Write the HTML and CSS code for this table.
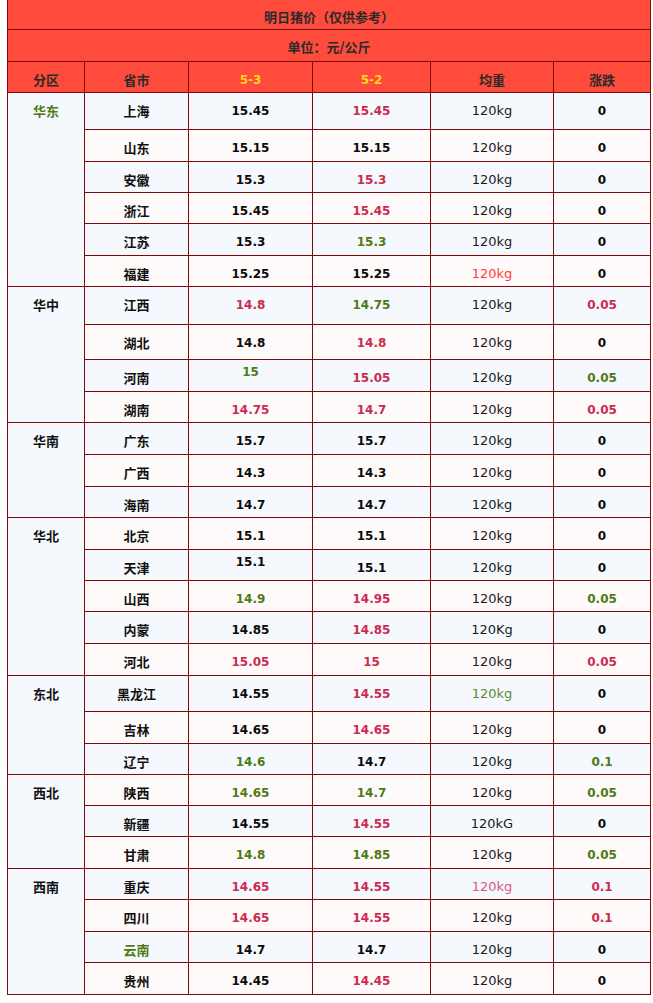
FILE: index.html
```html
<!DOCTYPE html>
<html lang="zh-CN">
<head>
<meta charset="utf-8">
<title>明日猪价</title>
<link rel="stylesheet" href="styles.css">
</head>
<body>
<table class="price">
  <colgroup>
    <col class="c1"><col class="c2"><col class="c3"><col class="c4"><col class="c5"><col class="c6">
  </colgroup>
  <thead>
    <tr class="h30"><th colspan="6" class="title">明日猪价（仅供参考）</th></tr>
    <tr class="h32"><th colspan="6" class="title">单位：元/公斤</th></tr>
    <tr class="h31">
      <th>分区</th><th>省市</th><th class="date">5-3</th><th class="date">5-2</th><th>均重</th><th>涨跌</th>
    </tr>
  </thead>
  <tbody>
    <tr class="b h37"><td rowspan="6" class="region green">华东</td><td class="prov">上海</td><td class="num">15.45</td><td class="num red">15.45</td><td class="wt">120kg</td><td class="num">0</td></tr>
    <tr class="w h32"><td class="prov">山东</td><td class="num">15.15</td><td class="num">15.15</td><td class="wt">120kg</td><td class="num">0</td></tr>
    <tr class="b h31"><td class="prov">安徽</td><td class="num">15.3</td><td class="num red">15.3</td><td class="wt">120kg</td><td class="num">0</td></tr>
    <tr class="w h31"><td class="prov">浙江</td><td class="num">15.45</td><td class="num red">15.45</td><td class="wt">120kg</td><td class="num">0</td></tr>
    <tr class="b h32"><td class="prov">江苏</td><td class="num">15.3</td><td class="num green">15.3</td><td class="wt">120kg</td><td class="num">0</td></tr>
    <tr class="w h31"><td class="prov">福建</td><td class="num">15.25</td><td class="num">15.25</td><td class="wt bright">120kg</td><td class="num">0</td></tr>

    <tr class="b h38"><td rowspan="4" class="region">华中</td><td class="prov">江西</td><td class="num red">14.8</td><td class="num green">14.75</td><td class="wt">120kg</td><td class="num red">0.05</td></tr>
    <tr class="w h35"><td class="prov">湖北</td><td class="num">14.8</td><td class="num red">14.8</td><td class="wt">120kg</td><td class="num">0</td></tr>
    <tr class="b h32"><td class="prov">河南</td><td class="num green up">15</td><td class="num red">15.05</td><td class="wt">120kg</td><td class="num green">0.05</td></tr>
    <tr class="w h31"><td class="prov">湖南</td><td class="num red">14.75</td><td class="num red">14.7</td><td class="wt">120kg</td><td class="num red">0.05</td></tr>

    <tr class="b h32"><td rowspan="3" class="region">华南</td><td class="prov">广东</td><td class="num">15.7</td><td class="num">15.7</td><td class="wt">120kg</td><td class="num">0</td></tr>
    <tr class="w h32"><td class="prov">广西</td><td class="num">14.3</td><td class="num">14.3</td><td class="wt">120kg</td><td class="num">0</td></tr>
    <tr class="b h31"><td class="prov">海南</td><td class="num">14.7</td><td class="num">14.7</td><td class="wt">120kg</td><td class="num">0</td></tr>

    <tr class="w h32"><td rowspan="5" class="region">华北</td><td class="prov">北京</td><td class="num">15.1</td><td class="num">15.1</td><td class="wt">120kg</td><td class="num">0</td></tr>
    <tr class="b h31"><td class="prov">天津</td><td class="num up">15.1</td><td class="num">15.1</td><td class="wt">120kg</td><td class="num">0</td></tr>
    <tr class="w h31"><td class="prov">山西</td><td class="num green">14.9</td><td class="num red">14.95</td><td class="wt">120kg</td><td class="num green">0.05</td></tr>
    <tr class="b h32"><td class="prov">内蒙</td><td class="num">14.85</td><td class="num red">14.85</td><td class="wt">120Kg</td><td class="num">0</td></tr>
    <tr class="w h32"><td class="prov">河北</td><td class="num red">15.05</td><td class="num red">15</td><td class="wt">120kg</td><td class="num red">0.05</td></tr>

    <tr class="b h36"><td rowspan="3" class="region">东北</td><td class="prov">黑龙江</td><td class="num">14.55</td><td class="num red">14.55</td><td class="wt lightgreen">120kg</td><td class="num">0</td></tr>
    <tr class="w h32"><td class="prov">吉林</td><td class="num">14.65</td><td class="num red">14.65</td><td class="wt">120kg</td><td class="num">0</td></tr>
    <tr class="b h31"><td class="prov">辽宁</td><td class="num green">14.6</td><td class="num">14.7</td><td class="wt">120kg</td><td class="num green">0.1</td></tr>

    <tr class="w h31"><td rowspan="3" class="region">西北</td><td class="prov">陕西</td><td class="num green">14.65</td><td class="num green">14.7</td><td class="wt">120kg</td><td class="num green">0.05</td></tr>
    <tr class="b h31"><td class="prov">新疆</td><td class="num">14.55</td><td class="num red">14.55</td><td class="wt">120kG</td><td class="num">0</td></tr>
    <tr class="w h32"><td class="prov">甘肃</td><td class="num green">14.8</td><td class="num green">14.85</td><td class="wt">120kg</td><td class="num green">0.05</td></tr>

    <tr class="b h31"><td rowspan="4" class="region">西南</td><td class="prov">重庆</td><td class="num red">14.65</td><td class="num red">14.55</td><td class="wt pink">120kg</td><td class="num red">0.1</td></tr>
    <tr class="w h32"><td class="prov">四川</td><td class="num red">14.65</td><td class="num red">14.55</td><td class="wt">120kg</td><td class="num red">0.1</td></tr>
    <tr class="b h31"><td class="prov green">云南</td><td class="num">14.7</td><td class="num">14.7</td><td class="wt">120kg</td><td class="num">0</td></tr>
    <tr class="w h32"><td class="prov">贵州</td><td class="num">14.45</td><td class="num red">14.45</td><td class="wt">120kg</td><td class="num">0</td></tr>
  </tbody>
</table>
</body>
</html>
```

FILE: styles.css
```css
html, body {
  margin: 0;
  padding: 0;
  background: #ffffff;
}

.price {
  border-collapse: collapse;
  table-layout: fixed;
  width: 643px;
  margin: -1px 0 0 7px;
  font-family: "Noto Sans CJK SC", "DejaVu Sans", sans-serif;
  font-size: 13px;
  color: #111;
}

.c1 { width: 77px; }
.c2 { width: 104px; }
.c3 { width: 124px; }
.c4 { width: 118px; }
.c5 { width: 123px; }
.c6 { width: 97px; }

.price th,
.price td {
  border: 1px solid #7d0a0a;
  padding: 9px 0 0;
  text-align: center;
  vertical-align: top;
  line-height: 18px;
}

.price thead th {
  background: #ff4b3c;
  color: #2a2a2a;
  font-weight: bold;
}

.price thead th.title {
  padding-top: 8px;
}

.price th.date {
  color: #ffd422;
  font-family: "DejaVu Sans", sans-serif;
  font-size: 12px;
}

.h30 { height: 30px; }
.h31 { height: 31px; }
.h32 { height: 32px; }
.h35 { height: 35px; }
.h36 { height: 36px; }
.h37 { height: 37px; }
.h38 { height: 38px; }

.b td { background: #f5f9fd; }
.w td { background: #fffafa; }

.price td.region {
  background: #f5f9fd;
  font-weight: bold;
}

.prov {
  font-weight: bold;
}

.num {
  font-family: "DejaVu Sans", sans-serif;
  font-weight: bold;
  font-size: 12px;
  color: #0a0a0a;
}

.wt {
  font-family: "DejaVu Sans", sans-serif;
  font-size: 13px;
  color: #1a1a1a;
}

.price td.up {
  padding-top: 3px;
}

.price .red { color: #cc2b50; }
.price .green { color: #4e7a16; }
.price .bright { color: #ff3b3b; }
.price .pink { color: #d9597c; }
.price .lightgreen { color: #5b8c35; }
```
